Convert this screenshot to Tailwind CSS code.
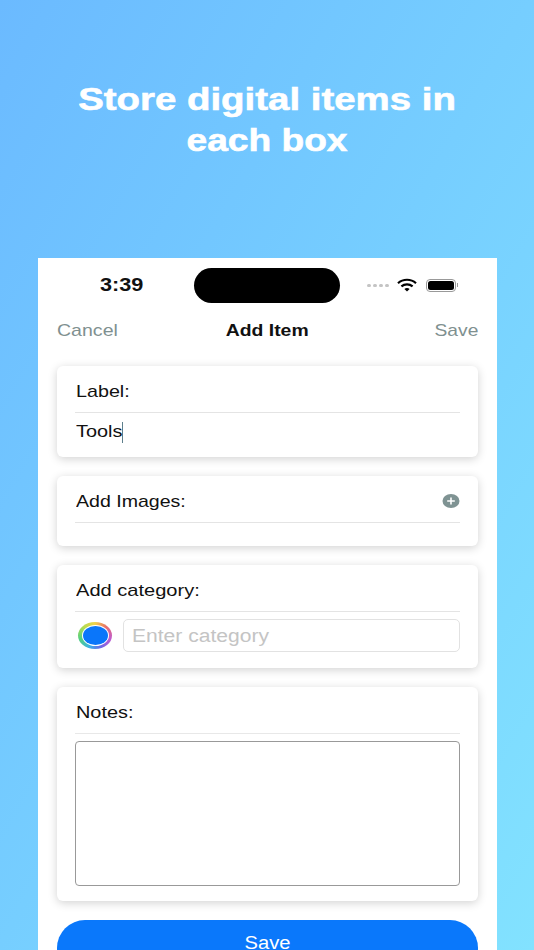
<!DOCTYPE html>
<html lang="en">
<head>
  <meta charset="UTF-8">
  <meta name="viewport" content="width=device-width, initial-scale=1.0">
  <title>Add Item</title>
  <script src="https://cdn.jsdelivr.net/npm/@tailwindcss/browser@4"></script>
</head>
<body class="font-['Liberation_Sans',sans-serif]">
  <div class="h-[950px] w-[534px] overflow-hidden bg-gradient-to-br from-[#6bbaff] to-[#82e2ff]">
    <h1 class="h-[258px] pt-[79px] text-center text-[32px] leading-[41px] font-bold text-white [-webkit-text-stroke:0.6px_white]">
      <span class="block scale-x-[1.2] whitespace-nowrap">Store digital items in</span>
      <span class="block scale-x-[1.16] whitespace-nowrap">each box</span>
    </h1>

    <div class="ml-[38px] h-[692px] w-[459px] bg-white px-[19px]">
      <!-- status bar -->
      <div class="-mx-[19px] flex h-[45px] items-start pt-[10px]">
        <div class="flex h-[35px] w-[156px] items-center pl-[62px]">
          <span class="origin-left scale-x-[1.24] text-[17.5px] font-semibold text-[#111]">3:39</span>
        </div>
        <div class="h-[35px] w-[146px] rounded-full bg-black"></div>
        <div class="ml-[27px] flex h-[35px] items-center">
          <div class="flex gap-[2px]">
            <span class="h-[3px] w-[4px] rounded-full bg-[#c4c4c4]"></span>
            <span class="h-[3px] w-[4px] rounded-full bg-[#c4c4c4]"></span>
            <span class="h-[3px] w-[4px] rounded-full bg-[#c4c4c4]"></span>
            <span class="h-[3px] w-[4px] rounded-full bg-[#c4c4c4]"></span>
          </div>
          <svg class="ml-[8px] -mt-[2px]" width="20" height="14" viewBox="0 0 20 14" fill="none" stroke="#000" stroke-width="2.2">
            <path d="M1 5.2C6 .6 14 .6 19 5.2"/>
            <path d="M4.4 8.4c3.2-2.8 8-2.8 11.2 0"/>
            <path d="M10 13.6 7.4 10.9c1.5-1.2 3.7-1.2 5.2 0z" fill="#000" stroke="none"/>
          </svg>
          <div class="ml-[9px] -mt-[1px] flex items-center">
            <div class="flex h-[13px] w-[30px] items-center justify-center rounded-[4px] border border-[#999]">
              <div class="h-[9px] w-[26px] rounded-[2.5px] bg-black"></div>
            </div>
            <span class="ml-[1px] h-[4px] w-[1px] bg-[#999]"></span>
          </div>
        </div>
      </div>

      <!-- nav -->
      <div class="grid h-[63px] grid-cols-3 items-center pb-[8px] text-[17px] text-[#7f9090]">
        <span class="origin-left scale-x-[1.15]">Cancel</span>
        <span class="scale-x-[1.14] text-center font-bold text-[#111]">Add Item</span>
        <span class="origin-right scale-x-[1.13] text-right">Save</span>
      </div>

      <div class="flex flex-col gap-[19px] text-[17px] text-[#111]">
        <section class="h-[91px] rounded-[6px] bg-white px-[18px] shadow-[0_2px_10px_rgba(0,0,0,0.18)]">
          <div class="flex h-[47px] items-center border-b border-[#e4e4e4] pt-[5px]">
            <span class="ml-[0.5px] origin-left scale-x-[1.16]">Label:</span>
          </div>
          <div class="flex h-[38px] items-center">
            <span class="ml-[0.5px] w-[46px]"><span class="inline-block origin-left scale-x-[1.17]">Tools</span></span>
            <span class="h-[21px] w-[1.5px] bg-[#5d7f8c]"></span>
          </div>
        </section>

        <section class="h-[70px] rounded-[6px] bg-white px-[18px] shadow-[0_2px_10px_rgba(0,0,0,0.18)]">
          <div class="flex h-[47px] items-center justify-between border-b border-[#e4e4e4] pt-[5px]">
            <span class="ml-[0.5px] origin-left scale-x-[1.15]">Add Images:</span>
            <svg class="-mt-[2px]" width="18" height="14" viewBox="0 0 18 14">
              <ellipse cx="9" cy="7" rx="8.5" ry="7" fill="#7f9393"/>
              <path d="M9 3.5v7M5.2 7h7.6" stroke="#fff" stroke-width="1.6"/>
            </svg>
          </div>
        </section>

        <section class="h-[103px] rounded-[6px] bg-white px-[18px] shadow-[0_2px_10px_rgba(0,0,0,0.18)]">
          <div class="flex h-[47px] items-center border-b border-[#e4e4e4] pt-[5px]">
            <span class="ml-[0.5px] origin-left scale-x-[1.18]">Add category:</span>
          </div>
          <div class="mt-[7px] flex items-center gap-[11px] pl-[3px]">
            <div class="flex h-[27px] w-[34px] items-center justify-center rounded-[50%] bg-[conic-gradient(#f0d24a,#e8706a,#c05ad0,#6a6ae8,#3bb0e8,#52d080,#b8dc50,#f0d24a)]">
              <div class="flex h-[21px] w-[27px] items-center justify-center rounded-[50%] bg-white">
                <div class="h-[19px] w-[25px] rounded-[50%] bg-[#0a76fa]"></div>
              </div>
            </div>
            <div class="flex h-[33px] flex-1 items-center rounded-[5px] border border-[#e2e2e2] pt-[1px] pl-[8px] text-[18px] text-[#c4c4c4]">
              <span class="origin-left scale-x-[1.17]">Enter category</span>
            </div>
          </div>
        </section>

        <section class="h-[214px] rounded-[6px] bg-white px-[18px] shadow-[0_2px_10px_rgba(0,0,0,0.18)]">
          <div class="flex h-[47px] items-center border-b border-[#e8e8e8] pt-[5px]">
            <span class="ml-[0.5px] origin-left scale-x-[1.17]">Notes:</span>
          </div>
          <div class="mt-[7px] h-[145px] rounded-[4px] border-[1.5px] border-[#999]"></div>
        </section>

        <div class="flex h-[56px] items-center justify-center rounded-full bg-[#0a78fb] pb-[10px] text-[18px] text-white">
          <span class="scale-x-[1.12]">Save</span>
        </div>
      </div>
    </div>
  </div>
</body>
</html>
